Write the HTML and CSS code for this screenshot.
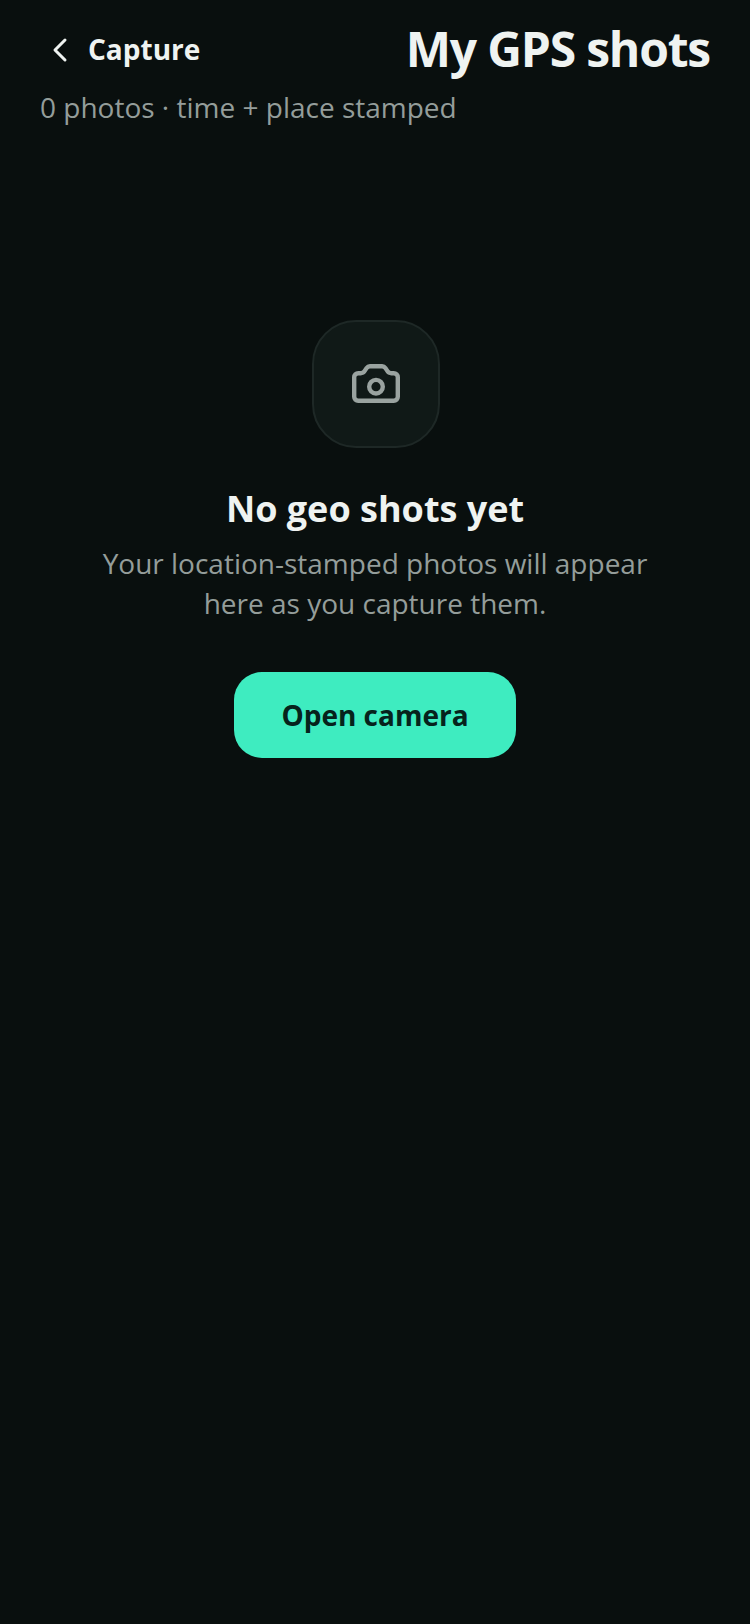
FILE: index.html
```html
<!DOCTYPE html>
<html lang="en">
<head>
    <meta charset="UTF-8">
    <meta name="viewport" content="width=device-width, initial-scale=1.0">
    <title>My GPS shots</title>
    <link rel="stylesheet" href="styles.css">
</head>
<body>
    <header class="header">
        <div class="top-row">
            <a class="back">
                <svg class="back-icon" viewBox="0 0 24 24" width="24" height="32" fill="none" stroke="currentColor" stroke-width="3" stroke-linecap="round" stroke-linejoin="round">
                    <path d="M17 3 7 13l10 10"/>
                </svg>
                <span>Capture</span>
            </a>
            <h1 class="title">My GPS shots</h1>
        </div>
        <p class="subtitle">0 photos · time + place stamped</p>
    </header>
    <main class="empty">
        <div class="empty-tile">
            <svg viewBox="0 0 48 40" width="48" height="40" fill="none" stroke="currentColor" stroke-width="4.4" stroke-linejoin="round">
                <path d="M18 2.200h12a4 4 0 0 1 3.300 1.700l2 3a5 5 0 0 0 4.100 2.300h2.400a4 4 0 0 1 4 4v19.600a4 4 0 0 1-4 4H6.200a4 4 0 0 1-4-4V13.200a4 4 0 0 1 4-4h2.400a5 5 0 0 0 4.100-2.300l2-3A4 4 0 0 1 18 2.200z"/>
                <circle cx="24" cy="22.700" r="6.800"/>
            </svg>
        </div>
        <h2 class="empty-title">No geo shots yet</h2>
        <p class="empty-text">Your location-stamped photos will appear<br>here as you capture them.</p>
        <button class="open-btn" type="button">Open camera</button>
    </main>
</body>
</html>
```

FILE: styles.css
```css
body {
    font-family: "Open Sans", sans-serif;
    background-color: #090f0e;
    color: #eff3f1;
    margin: 0;
    padding: 0;
    height: 1624px;
    overflow: hidden;
}
.header {
    padding: 16px 40px 0;
}
.top-row {
    display: flex;
    justify-content: space-between;
    align-items: center;
}
.back {
    display: flex;
    align-items: center;
    gap: 16px;
    padding-left: 8px;
    font-size: 28px;
    font-weight: 700;
}
.title {
    margin: 0;
    font-size: 48px;
    line-height: 66px;
    font-weight: 700;
    letter-spacing: -1.2px;
}
.subtitle {
    margin: 5px 0 0;
    font-size: 28px;
    line-height: 40px;
    color: #949d9a;
}
.empty {
    display: flex;
    flex-direction: column;
    align-items: center;
    padding-top: 193px;
}
.empty-tile {
    box-sizing: border-box;
    width: 128px;
    height: 128px;
    margin-left: 2px;
    display: flex;
    align-items: center;
    justify-content: center;
    background-color: #101917;
    border: 2px solid #1e2826;
    border-radius: 44px;
    color: #9aa3a0;
}
.empty-title {
    margin: 36px 0 0;
    font-size: 36px;
    line-height: 50px;
    font-weight: 700;
}
.empty-text {
    margin: 9px 0 0;
    font-size: 28px;
    line-height: 40px;
    color: #949d9a;
    text-align: center;
}
.open-btn {
    margin-top: 49px;
    width: 282px;
    height: 86px;
    background-color: #3eecc0;
    color: #06231c;
    border: none;
    border-radius: 28px;
    font-family: inherit;
    font-size: 28px;
    font-weight: 700;
}
```
